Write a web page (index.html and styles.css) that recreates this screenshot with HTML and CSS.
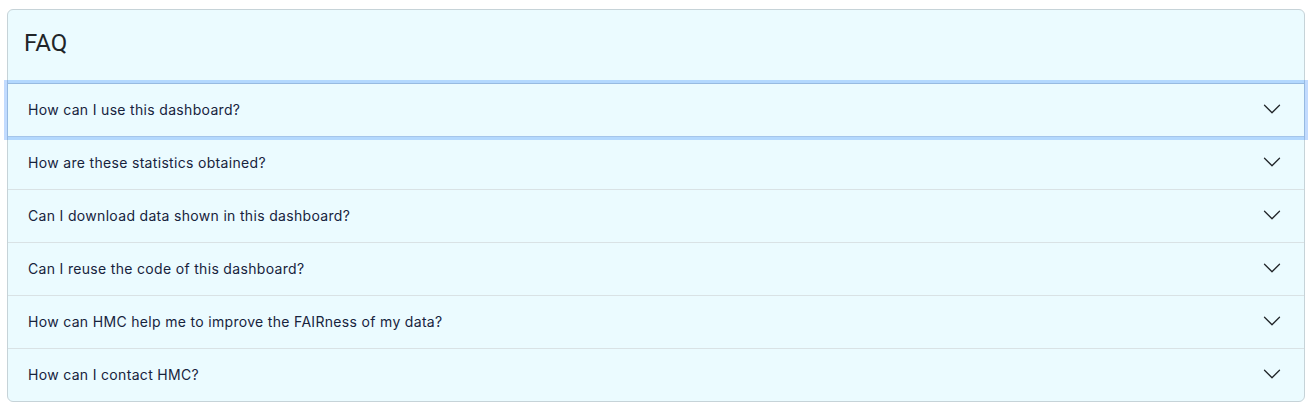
FILE: index.html
```html
<!DOCTYPE html>
<html lang="en">
<head>
    <meta charset="UTF-8">
    <meta name="viewport" content="width=device-width, initial-scale=1.0">
    <title>FAQ</title>
    <link rel="stylesheet" href="styles.css">
</head>
<body>
    <!-- FAQ card -->
    <div class="card">
        <div class="card-header">
            <h4>FAQ</h4>
        </div>

        <div class="accordion">
            <div class="accordion-item">
                <button class="accordion-button focused">
                    <span>How can I use this dashboard?</span>
                    <svg class="chevron" viewBox="0 0 16 16"><path d="M1.646 4.646a.5.5 0 0 1 .708 0L8 10.293l5.646-5.647a.5.5 0 0 1 .708.708l-6 6a.5.5 0 0 1-.708 0l-6-6a.5.5 0 0 1 0-.708z"/></svg>
                </button>
            </div>
            <div class="accordion-item">
                <button class="accordion-button">
                    <span>How are these statistics obtained?</span>
                    <svg class="chevron" viewBox="0 0 16 16"><path d="M1.646 4.646a.5.5 0 0 1 .708 0L8 10.293l5.646-5.647a.5.5 0 0 1 .708.708l-6 6a.5.5 0 0 1-.708 0l-6-6a.5.5 0 0 1 0-.708z"/></svg>
                </button>
            </div>
            <div class="accordion-item">
                <button class="accordion-button">
                    <span>Can I download data shown in this dashboard?</span>
                    <svg class="chevron" viewBox="0 0 16 16"><path d="M1.646 4.646a.5.5 0 0 1 .708 0L8 10.293l5.646-5.647a.5.5 0 0 1 .708.708l-6 6a.5.5 0 0 1-.708 0l-6-6a.5.5 0 0 1 0-.708z"/></svg>
                </button>
            </div>
            <div class="accordion-item">
                <button class="accordion-button">
                    <span>Can I reuse the code of this dashboard?</span>
                    <svg class="chevron" viewBox="0 0 16 16"><path d="M1.646 4.646a.5.5 0 0 1 .708 0L8 10.293l5.646-5.647a.5.5 0 0 1 .708.708l-6 6a.5.5 0 0 1-.708 0l-6-6a.5.5 0 0 1 0-.708z"/></svg>
                </button>
            </div>
            <div class="accordion-item">
                <button class="accordion-button">
                    <span>How can HMC help me to improve the FAIRness of my data?</span>
                    <svg class="chevron" viewBox="0 0 16 16"><path d="M1.646 4.646a.5.5 0 0 1 .708 0L8 10.293l5.646-5.647a.5.5 0 0 1 .708.708l-6 6a.5.5 0 0 1-.708 0l-6-6a.5.5 0 0 1 0-.708z"/></svg>
                </button>
            </div>
            <div class="accordion-item">
                <button class="accordion-button">
                    <span>How can I contact HMC?</span>
                    <svg class="chevron" viewBox="0 0 16 16"><path d="M1.646 4.646a.5.5 0 0 1 .708 0L8 10.293l5.646-5.647a.5.5 0 0 1 .708.708l-6 6a.5.5 0 0 1-.708 0l-6-6a.5.5 0 0 1 0-.708z"/></svg>
                </button>
            </div>
        </div>
    </div>
</body>
</html>
```

FILE: styles.css
```css
/* base */
body {
    margin: 0;
    padding: 9px 7px 0 7px;
    background-color: #fff;
    font-family: Roboto, "Liberation Sans", sans-serif;
    color: #1b2a41;
}

/* card */
.card {
    background-color: #ebfbff;
    border: 1px solid #c6d3d8;
    border-radius: 6px;
}

.card-header {
    height: 73px;
    padding: 0 16px;
    display: flex;
    align-items: center;
    border-bottom: 1px solid #c6d3d8;
}

.card-header h4 {
    margin: 0;
    font-size: 24px;
    font-weight: 400;
    color: #212529;
    padding-bottom: 8px;
}

/* accordion */
.accordion-item {
    border-bottom: 1px solid #d9e2e5;
}

.accordion-item:last-child {
    border-bottom: none;
}

.accordion-button {
    width: 100%;
    height: 52px;
    display: flex;
    align-items: center;
    justify-content: space-between;
    padding: 0 22px 0 20px;
    background: none;
    border: none;
    font-family: Inter, "Liberation Sans", sans-serif;
    font-size: 14px;
    letter-spacing: 0.32px;
    color: #17233d;
    text-align: left;
    cursor: pointer;
    outline: none;
}

.accordion-button span {
    padding-bottom: 1px;
}

.accordion-button.focused {
    position: relative;
    z-index: 2;
    box-shadow: 0 0 0 4px rgba(13, 110, 253, 0.25);
}

.chevron {
    width: 20px;
    height: 20px;
    fill: #212529;
    flex-shrink: 0;
    margin-bottom: 2px;
}
```
